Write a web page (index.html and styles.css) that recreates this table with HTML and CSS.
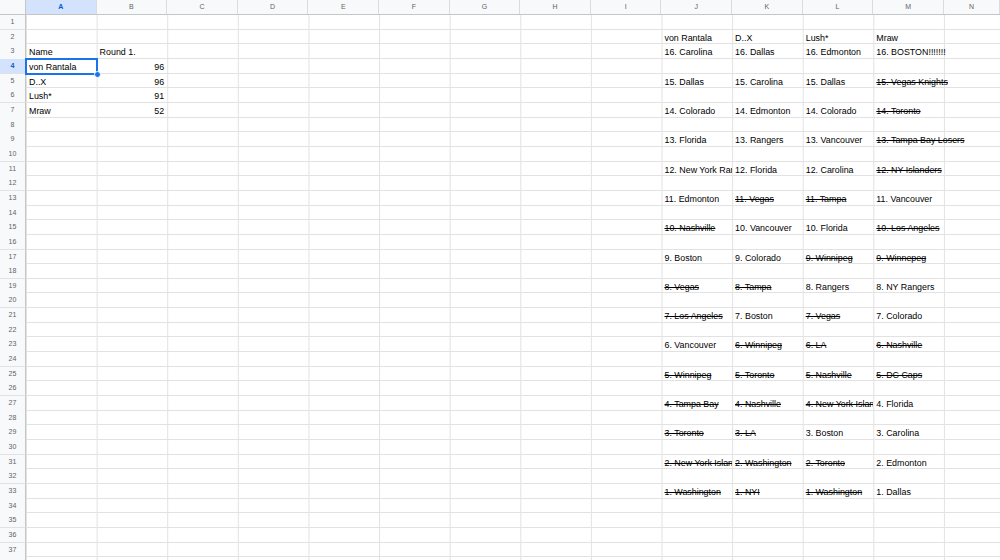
FILE: index.html
```html
<!DOCTYPE html>
<html>
<head>
<meta charset="utf-8">
<link rel="stylesheet" href="styles.css">
</head>
<body>
<div class="sheet">
  <div class="colhead">
    <div class="corner"></div>
    <div class="ch sel">A</div><div class="ch">B</div><div class="ch">C</div><div class="ch">D</div><div class="ch">E</div><div class="ch">F</div><div class="ch">G</div><div class="ch">H</div><div class="ch">I</div><div class="ch">J</div><div class="ch">K</div><div class="ch">L</div><div class="ch">M</div><div class="ch">N</div>
  </div>
  <div class="r"><div class="h">1</div></div>
  <div class="r"><div class="h">2</div><div class="c j">von Rantala</div><div class="c">D..X</div><div class="c">Lush*</div><div class="c">Mraw</div></div>
  <div class="r"><div class="h">3</div><div class="c">Name</div><div class="c">Round 1.</div><div class="c j">16. Carolina</div><div class="c">16. Dallas</div><div class="c">16. Edmonton</div><div class="c ov">16. BOSTON!!!!!!!</div></div>
  <div class="r"><div class="h sel">4</div><div class="c sel">von Rantala</div><div class="c num">96</div></div>
  <div class="r"><div class="h">5</div><div class="c">D..X</div><div class="c num">96</div><div class="c j">15. Dallas</div><div class="c">15. Carolina</div><div class="c">15. Dallas</div><div class="c ov x">15. Vegas Knights</div></div>
  <div class="r"><div class="h">6</div><div class="c">Lush*</div><div class="c num">91</div></div>
  <div class="r"><div class="h">7</div><div class="c">Mraw</div><div class="c num">52</div><div class="c j">14. Colorado</div><div class="c">14. Edmonton</div><div class="c">14. Colorado</div><div class="c ov x">14. Toronto</div></div>
  <div class="r"><div class="h">8</div></div>
  <div class="r"><div class="h">9</div><div class="c j">13. Florida</div><div class="c">13. Rangers</div><div class="c">13. Vancouver</div><div class="c ov x">13. Tampa Bay Losers</div></div>
  <div class="r"><div class="h">10</div></div>
  <div class="r"><div class="h">11</div><div class="c j">12. New York Rangers</div><div class="c">12. Florida</div><div class="c">12. Carolina</div><div class="c ov x">12. NY Islanders</div></div>
  <div class="r"><div class="h">12</div></div>
  <div class="r"><div class="h">13</div><div class="c j">11. Edmonton</div><div class="c x">11. Vegas</div><div class="c x">11. Tampa</div><div class="c ov">11. Vancouver</div></div>
  <div class="r"><div class="h">14</div></div>
  <div class="r"><div class="h">15</div><div class="c j x">10. Nashville</div><div class="c">10. Vancouver</div><div class="c">10. Florida</div><div class="c ov x">10. Los Angeles</div></div>
  <div class="r"><div class="h">16</div></div>
  <div class="r"><div class="h">17</div><div class="c j">9. Boston</div><div class="c">9. Colorado</div><div class="c x">9. Winnipeg</div><div class="c ov x">9. Winnepeg</div></div>
  <div class="r"><div class="h">18</div></div>
  <div class="r"><div class="h">19</div><div class="c j x">8. Vegas</div><div class="c x">8. Tampa</div><div class="c">8. Rangers</div><div class="c ov">8. NY Rangers</div></div>
  <div class="r"><div class="h">20</div></div>
  <div class="r"><div class="h">21</div><div class="c j x">7. Los Angeles</div><div class="c">7. Boston</div><div class="c x">7. Vegas</div><div class="c ov">7. Colorado</div></div>
  <div class="r"><div class="h">22</div></div>
  <div class="r"><div class="h">23</div><div class="c j">6. Vancouver</div><div class="c x">6. Winnipeg</div><div class="c x">6. LA</div><div class="c ov x">6. Nashville</div></div>
  <div class="r"><div class="h">24</div></div>
  <div class="r"><div class="h">25</div><div class="c j x">5. Winnipeg</div><div class="c x">5. Toronto</div><div class="c x">5. Nashville</div><div class="c ov x">5. DC Caps</div></div>
  <div class="r"><div class="h">26</div></div>
  <div class="r"><div class="h">27</div><div class="c j x">4. Tampa Bay</div><div class="c x">4. Nashville</div><div class="c x">4. New York Islanders</div><div class="c ov">4. Florida</div></div>
  <div class="r"><div class="h">28</div></div>
  <div class="r"><div class="h">29</div><div class="c j x">3. Toronto</div><div class="c x">3. LA</div><div class="c">3. Boston</div><div class="c ov">3. Carolina</div></div>
  <div class="r"><div class="h">30</div></div>
  <div class="r"><div class="h">31</div><div class="c j x">2. New York Islanders</div><div class="c x">2. Washington</div><div class="c x">2. Toronto</div><div class="c ov">2. Edmonton</div></div>
  <div class="r"><div class="h">32</div></div>
  <div class="r"><div class="h">33</div><div class="c j x">1. Washington</div><div class="c x">1. NYI</div><div class="c x">1. Washington</div><div class="c ov">1. Dallas</div></div>
  <div class="r"><div class="h">34</div></div>
  <div class="r"><div class="h">35</div></div>
  <div class="r"><div class="h">36</div></div>
  <div class="r"><div class="h">37</div></div>
  <div class="r"><div class="h">38</div></div>
</div>
</body>
</html>
```
FILE: styles.css
```css
html, body {
  margin: 0;
  padding: 0;
  background: #fff;
  overflow: hidden;
}
body {
  width: 1000px;
  height: 560px;
  font-family: "Liberation Sans", Arial, sans-serif;
}
.sheet {
  display: flex;
  flex-direction: column;
}
.colhead, .r {
  display: grid;
  grid-template-columns: 26px repeat(13, 70.615px) 1fr;
}
.colhead {
  height: 15px;
  box-sizing: border-box;
  border-bottom: 1px solid #c4c7c5;
  background: #f8f9fa;
}
.corner {
  border-right: 1px solid #c4c7c5;
}
.ch {
  box-sizing: border-box;
  border-right: 1px solid #dadce0;
  font-size: 7px;
  line-height: 14px;
  text-align: center;
  color: #5f6368;
}
.ch.sel {
  background: #d3e3fd;
  color: #0b57d0;
  font-weight: bold;
}
.r {
  height: 14.67px;
  box-sizing: border-box;
  border-bottom: 1px solid #e2e2e2;
  background-image: linear-gradient(to left, #e2e2e2 1px, transparent 1px);
  background-size: 70.615px 100%;
  background-position: 27px 0;
  background-repeat: repeat-x;
}
.h {
  box-sizing: border-box;
  background: #f8f9fa;
  border-right: 1px solid #c4c7c5;
  margin-bottom: -1px;
  border-bottom: 1px solid #e2e2e2;
  font-size: 7px;
  line-height: 14px;
  text-align: center;
  color: #5f6368;
}
.h.sel {
  background: #d3e3fd;
  color: #0b57d0;
  font-weight: bold;
}
.c {
  position: relative;
  box-sizing: border-box;
  padding: 1px 3px 0;
  font-size: 8.9px;
  line-height: 14px;
  color: #000;
  white-space: nowrap;
  overflow: hidden;
}
.c.j {
  grid-column-start: 11;
}
.c.ov {
  overflow: visible;
}
.c.num {
  text-align: right;
}
.c.x {
  text-decoration: line-through;
}
.c.sel {
  overflow: visible;
  margin-bottom: -1px;
  box-shadow: inset 0 0 0 1px #1a73e8, 0 0 0 1px #1a73e8;
}
.c.sel::after {
  content: "";
  position: absolute;
  right: -4px;
  bottom: -4px;
  width: 5px;
  height: 5px;
  border-radius: 50%;
  background: #1a73e8;
  border: 1px solid #fff;
}
```
